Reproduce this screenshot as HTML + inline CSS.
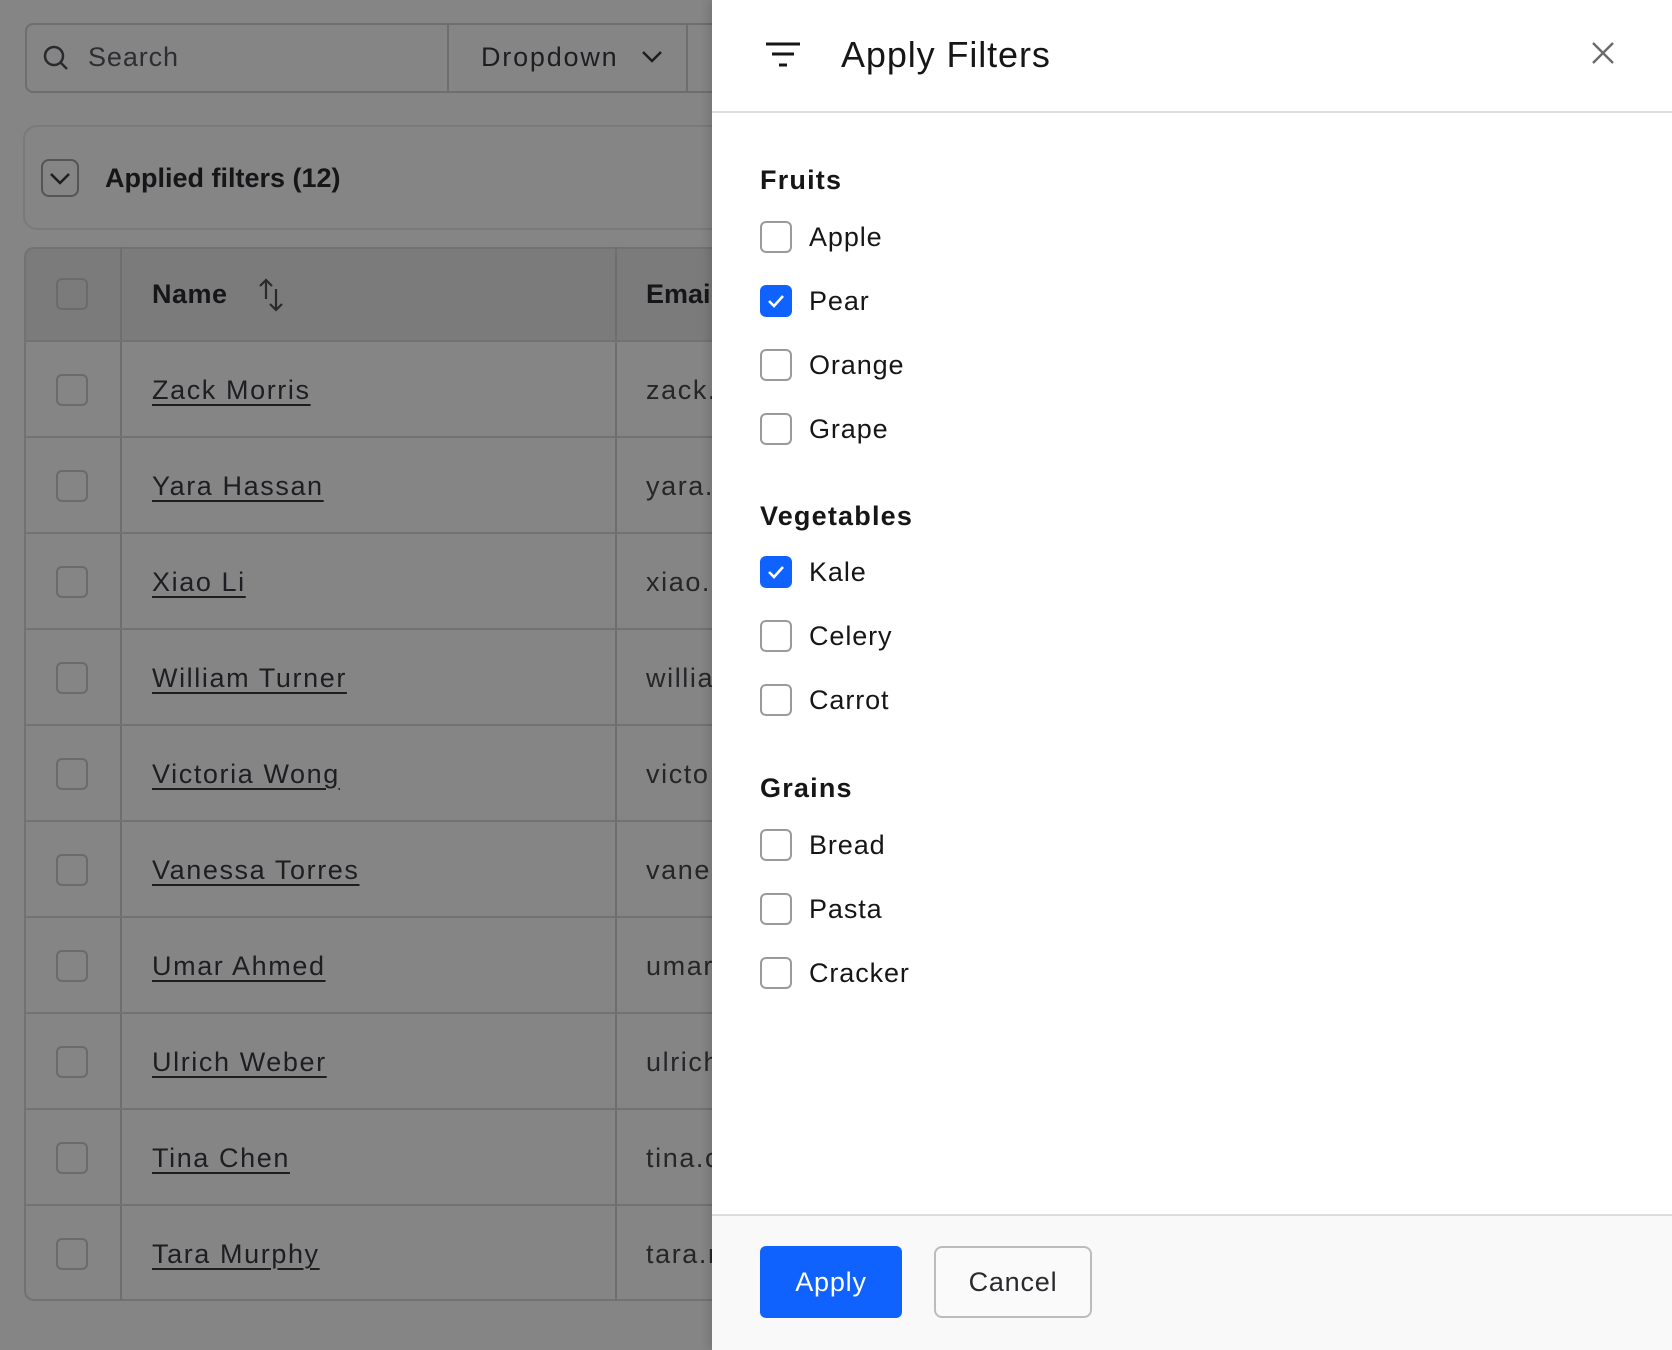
<!DOCTYPE html>
<html><head><meta charset="utf-8"><style>
*{box-sizing:border-box;margin:0;padding:0}
body{width:1672px;height:1350px;overflow:hidden;background:#858585;font-family:"Liberation Sans",sans-serif;position:relative}
.a{position:absolute}
.cb{position:absolute;width:32px;height:32px;border:2px solid #6b6b6b;border-radius:6px}
.nm{position:absolute;left:152px;font-size:27px;color:#1e1e22;text-decoration:underline;text-underline-offset:5px;text-decoration-thickness:2px;line-height:32px;letter-spacing:1.6px}
.em{position:absolute;left:646px;font-size:27px;color:#262629;line-height:32px;letter-spacing:1.6px}
.hl{position:absolute;left:24px;width:688px;height:2px;background:#727272}
.pc{position:absolute;left:760px;width:32px;height:32px;border:2px solid #9a9a9e;border-radius:6px;background:#fff}
.pc.on{background:#0f62fe;border-color:#0f62fe}
.pl{position:absolute;left:809px;font-size:27px;color:#161616;line-height:32px;letter-spacing:0.9px}
.ph{position:absolute;left:760px;font-size:27px;font-weight:bold;color:#161616;line-height:32px;letter-spacing:1.2px}
</style></head><body>
<div class="a" style="left:25px;top:23px;width:700px;height:70px;border:2px solid #6e6e6e;border-radius:8px;border-right:none"></div>
<div class="a" style="left:447px;top:23px;width:2px;height:70px;background:#6e6e6e"></div>
<div class="a" style="left:686px;top:23px;width:2px;height:70px;background:#6e6e6e"></div>
<svg class="a" style="left:42px;top:44px" width="28" height="28" viewBox="0 0 28 28"><circle cx="12" cy="12" r="9" fill="none" stroke="#2a2a2e" stroke-width="2.5"/><path d="M18.5 18.5L25 25" stroke="#2a2a2e" stroke-width="2.5"/></svg>
<div class="a" style="left:88px;top:42px;font-size:27px;color:#2e2e32;letter-spacing:0.9px">Search</div>
<div class="a" style="left:481px;top:42px;font-size:27px;color:#1e1e22;letter-spacing:1.8px">Dropdown</div>
<svg class="a" style="left:640px;top:48px" width="24" height="18"><path d="M3 4l9 9 9-9" fill="none" stroke="#1e1e22" stroke-width="2.5"/></svg>
<div class="a" style="left:23px;top:125px;width:720px;height:105px;border:2px solid #7a7a7a;border-radius:14px;border-right:none"></div>
<div class="a" style="left:41px;top:159px;width:38px;height:38px;border:2px solid #555;border-radius:8px"></div>
<svg class="a" style="left:48px;top:170px" width="24" height="18"><path d="M3 4l9 9 9-9" fill="none" stroke="#1e1e22" stroke-width="2.5"/></svg>
<div class="a" style="left:105px;top:163px;font-size:27px;font-weight:bold;color:#161618">Applied filters (12)</div>
<div class="a" style="left:24px;top:247px;width:720px;height:1054px;border:2px solid #727272;border-radius:10px;border-right:none"></div>
<div class="a" style="left:26px;top:249px;width:686px;height:92px;background:#7b7b7b;border-radius:8px 0 0 0"></div>
<div class="a" style="left:120px;top:247px;width:2px;height:1054px;background:#6e6e6e"></div>
<div class="a" style="left:615px;top:247px;width:2px;height:1054px;background:#6e6e6e"></div>
<div class="cb" style="left:56px;top:278px"></div>
<div class="a" style="left:152px;top:278px;font-size:27px;font-weight:bold;color:#161618;line-height:32px;letter-spacing:0.5px">Name</div>
<svg class="a" style="left:256px;top:277px" width="34" height="36"><path d="M10 22V3M4 9l6-6 6 6M20 12v21M14 27l6 6 6-6" fill="none" stroke="#2a2a2e" stroke-width="2.2"/></svg>
<div class="a" style="left:646px;top:278px;font-size:27px;font-weight:bold;color:#161618;line-height:32px">Email</div>
<div class="hl" style="top:340px"></div>
<div class="cb" style="left:56px;top:374px"></div><div class="nm" style="top:374px">Zack Morris</div><div class="em" style="top:374px">zack.</div><div class="hl" style="top:436px"></div>
<div class="cb" style="left:56px;top:470px"></div><div class="nm" style="top:470px">Yara Hassan</div><div class="em" style="top:470px">yara.</div><div class="hl" style="top:532px"></div>
<div class="cb" style="left:56px;top:566px"></div><div class="nm" style="top:566px">Xiao Li</div><div class="em" style="top:566px">xiao.l</div><div class="hl" style="top:628px"></div>
<div class="cb" style="left:56px;top:662px"></div><div class="nm" style="top:662px">William Turner</div><div class="em" style="top:662px">willia</div><div class="hl" style="top:724px"></div>
<div class="cb" style="left:56px;top:758px"></div><div class="nm" style="top:758px">Victoria Wong</div><div class="em" style="top:758px">victo</div><div class="hl" style="top:820px"></div>
<div class="cb" style="left:56px;top:854px"></div><div class="nm" style="top:854px">Vanessa Torres</div><div class="em" style="top:854px">vanes</div><div class="hl" style="top:916px"></div>
<div class="cb" style="left:56px;top:950px"></div><div class="nm" style="top:950px">Umar Ahmed</div><div class="em" style="top:950px">umar</div><div class="hl" style="top:1012px"></div>
<div class="cb" style="left:56px;top:1046px"></div><div class="nm" style="top:1046px">Ulrich Weber</div><div class="em" style="top:1046px">ulrich</div><div class="hl" style="top:1108px"></div>
<div class="cb" style="left:56px;top:1142px"></div><div class="nm" style="top:1142px">Tina Chen</div><div class="em" style="top:1142px">tina.c</div><div class="hl" style="top:1204px"></div>
<div class="cb" style="left:56px;top:1238px"></div><div class="nm" style="top:1238px">Tara Murphy</div><div class="em" style="top:1238px">tara.r</div>
<div class="a" style="left:712px;top:0;width:960px;height:1350px;background:#fff;box-shadow:-4px 0 8px rgba(0,0,0,.12)"></div>
<div class="a" style="left:712px;top:111px;width:960px;height:2px;background:#dcdce0"></div>
<svg class="a" style="left:764px;top:40px" width="40" height="30"><path d="M2 4h34M8 14h22M15 25h8" stroke="#161616" stroke-width="3"/></svg>
<div class="a" style="left:841px;top:34px;font-size:36px;font-weight:500;color:#161616;letter-spacing:0.9px">Apply Filters</div>
<svg class="a" style="left:1590px;top:40px" width="26" height="26"><path d="M3 3l20 20M23 3L3 23" stroke="#6b6b6b" stroke-width="2.4"/></svg>
<div class="ph" style="top:164px">Fruits</div>
<div class="pc" style="top:221px"></div><div class="pl" style="top:221px">Apple</div>
<div class="pc on" style="top:285px"></div><div class="pl" style="top:285px">Pear</div>
<div class="pc" style="top:349px"></div><div class="pl" style="top:349px">Orange</div>
<div class="pc" style="top:413px"></div><div class="pl" style="top:413px">Grape</div>
<div class="ph" style="top:500px">Vegetables</div>
<div class="pc on" style="top:556px"></div><div class="pl" style="top:556px">Kale</div>
<div class="pc" style="top:620px"></div><div class="pl" style="top:620px">Celery</div>
<div class="pc" style="top:684px"></div><div class="pl" style="top:684px">Carrot</div>
<div class="ph" style="top:772px">Grains</div>
<div class="pc" style="top:829px"></div><div class="pl" style="top:829px">Bread</div>
<div class="pc" style="top:893px"></div><div class="pl" style="top:893px">Pasta</div>
<div class="pc" style="top:957px"></div><div class="pl" style="top:957px">Cracker</div>
<svg class="a" style="left:760px;top:285px" width="32" height="32"><path d="M9 16l5 5 9-10" fill="none" stroke="#fff" stroke-width="2.6"/></svg>
<svg class="a" style="left:760px;top:556px" width="32" height="32"><path d="M9 16l5 5 9-10" fill="none" stroke="#fff" stroke-width="2.6"/></svg>
<div class="a" style="left:712px;top:1214px;width:960px;height:136px;background:#f9f9f9;border-top:2px solid #dcdce0"></div>
<div class="a" style="left:760px;top:1246px;width:142px;height:72px;background:#0f62fe;border-radius:6px;color:#fff;font-size:27px;line-height:72px;text-align:center;letter-spacing:0.8px">Apply</div>
<div class="a" style="left:934px;top:1246px;width:158px;height:72px;background:#fafafa;border:2px solid #bcbcbc;border-radius:8px;color:#2a2a2e;font-size:27px;line-height:68px;text-align:center;letter-spacing:0.8px">Cancel</div>
</body></html>
